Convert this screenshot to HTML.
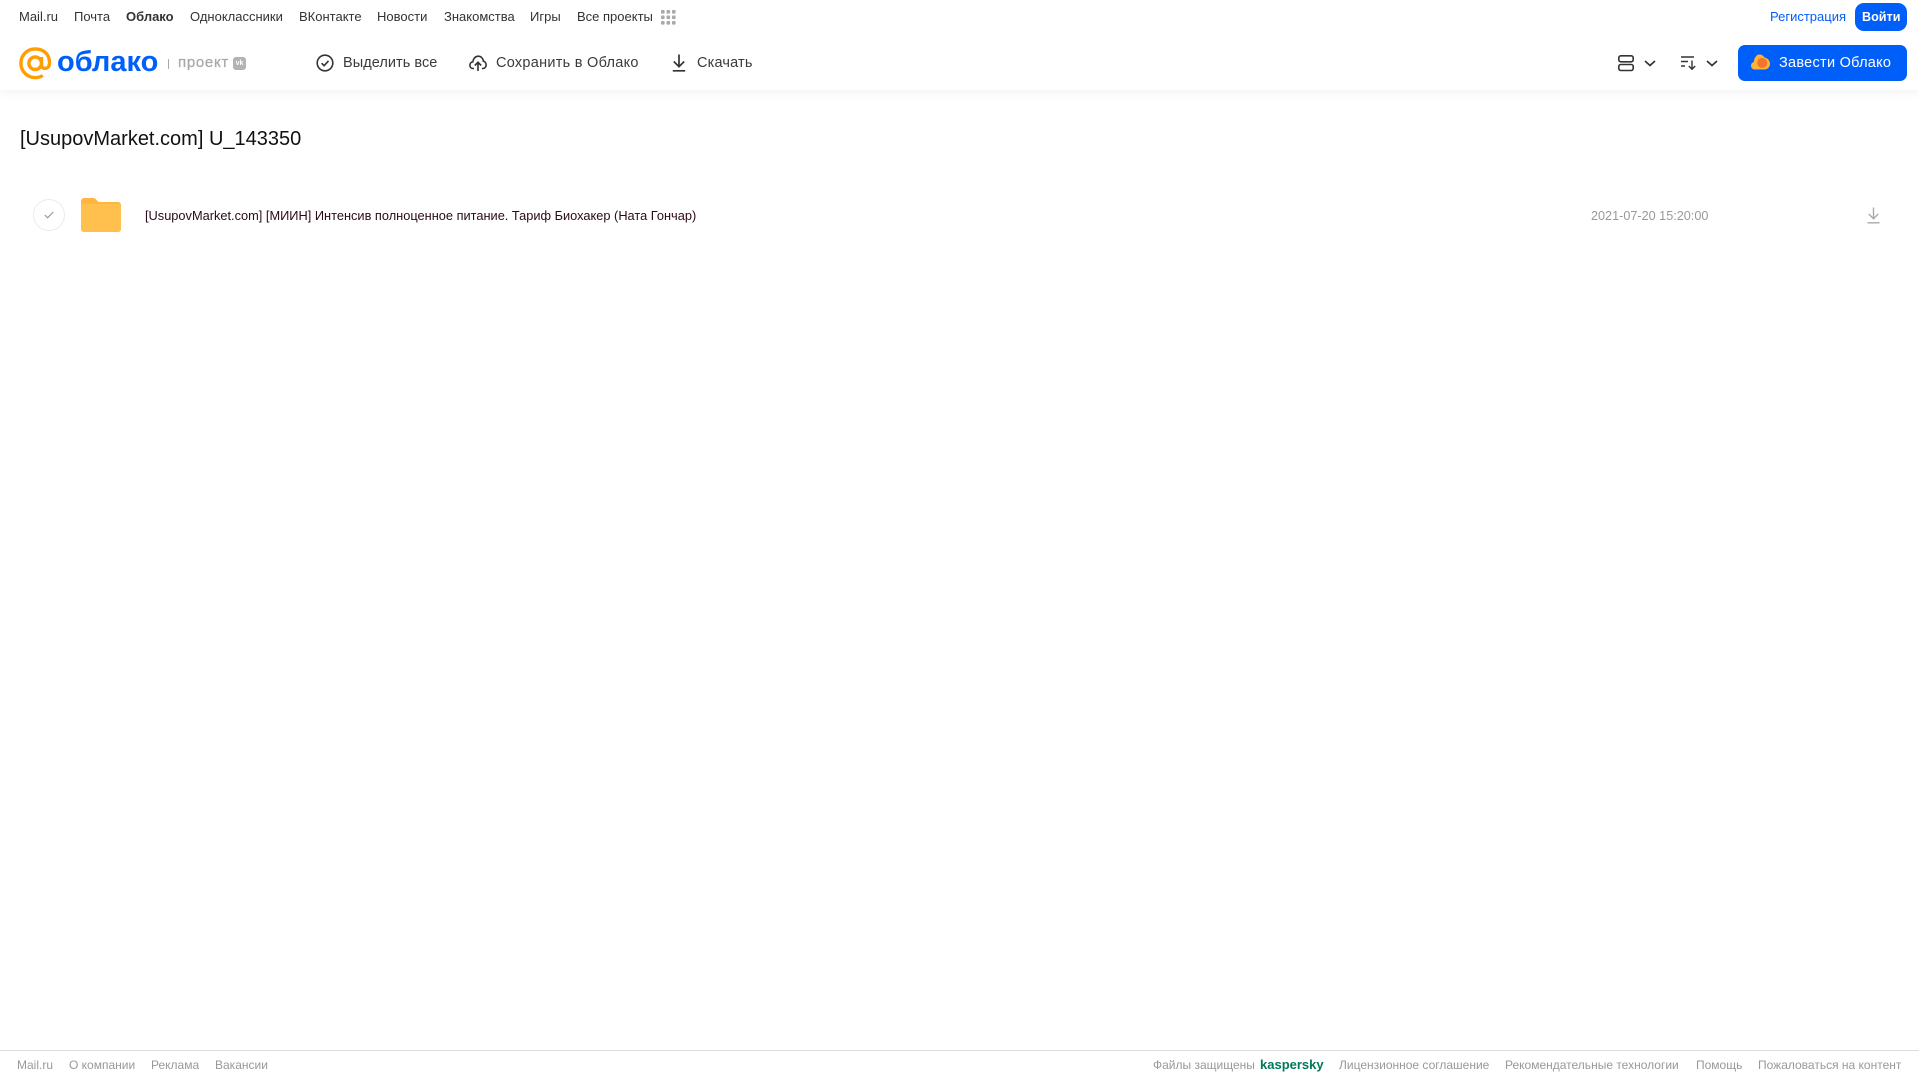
<!DOCTYPE html>
<html lang="ru"><head><meta charset="utf-8"><title>Облако</title>
<style>
html,body{margin:0;padding:0;background:#fff}
body{width:1919px;height:1079px;position:relative;overflow:hidden;font-family:"Liberation Sans",Arial,sans-serif}
.t{position:absolute;white-space:nowrap;line-height:20px;height:20px}
.n{top:7px;font-size:13px;color:#333}
.b{top:53px;font-size:14.5px;color:#3a3a3a}
.f{top:1055px;font-size:12px;color:#999}
svg{position:absolute;overflow:visible}
</style></head><body>
<div style="position:absolute;left:0;top:0;width:1919px;height:90px;background:#fff;box-shadow:0 2px 10px rgba(0,0,0,.06)"></div>

<span class="t n" style="left:19px">Mail.ru</span>
<span class="t n" style="left:74px">Почта</span>
<span class="t n" style="left:126px;font-weight:bold">Облако</span>
<span class="t n" style="left:190px">Одноклассники</span>
<span class="t n" style="left:299px">ВКонтакте</span>
<span class="t n" style="left:377px">Новости</span>
<span class="t n" style="left:444px">Знакомства</span>
<span class="t n" style="left:530px">Игры</span>
<span class="t n" style="left:577px">Все проекты</span>
<svg style="left:661px;top:10px" width="15" height="15" fill="#aaa"><rect x="0" y="0" width="3.6" height="3.6" rx=".8"/><rect x="5.5" y="0" width="3.6" height="3.6" rx=".8"/><rect x="11" y="0" width="3.6" height="3.6" rx=".8"/><rect x="0" y="5.5" width="3.6" height="3.6" rx=".8"/><rect x="5.5" y="5.5" width="3.6" height="3.6" rx=".8"/><rect x="11" y="5.5" width="3.6" height="3.6" rx=".8"/><rect x="0" y="11" width="3.6" height="3.6" rx=".8"/><rect x="5.5" y="11" width="3.6" height="3.6" rx=".8"/><rect x="11" y="11" width="3.6" height="3.6" rx=".8"/></svg>

<span class="t n" style="left:1770px;color:#005ff9">Регистрация</span>
<div style="position:absolute;left:1855px;top:3px;width:52px;height:28px;border-radius:9px;background:#005ff9"></div>
<span class="t n" style="left:1862px;color:#fff;font-weight:bold;font-size:12.6px">Войти</span>

<!-- logo -->
<svg style="left:19px;top:47px" width="33" height="33" viewBox="0 0 33 33" fill="none" stroke="#ff9e00" stroke-width="3.4"><circle cx="16.2" cy="16.2" r="6.3"/><path d="M22.5 10v8.2c0 4.6 7.6 4.6 8-1.600C31 7.800 25 1.900 16.200 1.900 8.200 1.900 1.900 8.200 1.900 16.200S8.200 30.600 16.200 30.600c3 0 5.400-.7 7.600-2.100"/></svg>
<span class="t" style="left:57px;top:45px;height:34px;line-height:34px;font-size:29px;font-weight:bold;color:#005ff9">облако</span>
<div style="position:absolute;left:168px;top:59px;width:1px;height:10px;background:#aaa"></div>
<span class="t" style="left:178px;top:53px;font-size:15px;color:#a8a8a8;letter-spacing:.7px;-webkit-text-stroke:.25px #a8a8a8">проект</span>
<div style="position:absolute;left:233px;top:57px;width:13px;height:13px;border-radius:3px;background:#b3b3b3;color:#fff;font-size:7px;font-weight:bold;line-height:13px;text-align:center">vk</div>

<!-- toolbar -->
<svg style="left:316px;top:54px" width="18" height="18" viewBox="0 0 18 18" fill="none" stroke="#333" stroke-width="1.6"><circle cx="9" cy="9" r="7.8"/><path d="M5.6 9.2l2.5 2.5 4.4-4.8"/></svg>
<span class="t b" style="left:343px;letter-spacing:.05px">Выделить все</span>
<svg style="left:469px;top:54px" width="18" height="18" viewBox="0 0 18 18" fill="none" stroke="#333" stroke-width="1.6"><path d="M5 14.500H4.200C2 14.500.9 12.800.9 11.200c0-1.800 1.300-3.200 2.900-3.400C4.200 4.600 6.400 2.200 9.200 2.200c2.700 0 4.800 2.100 5.200 5 1.600.3 2.700 1.900 2.700 3.800 0 1.900-1.200 3.500-3.300 3.500h-.9"/><path d="M9 17V8.500M5.800 11.500L9 8.300l3.200 3.200"/></svg>
<span class="t b" style="left:496px;letter-spacing:.27px">Сохранить в Облако</span>
<svg style="left:672px;top:54px" width="14" height="18" viewBox="0 0 14 18" fill="none" stroke="#333" stroke-width="1.7"><path d="M7 .5v12M1.800 7.500L7 12.700l5.200-5.200M.8 16.800h12.400"/></svg>
<span class="t b" style="left:697px;letter-spacing:.17px">Скачать</span>

<svg style="left:1618px;top:55px" width="17" height="17" viewBox="0 0 17 17" fill="none" stroke="#333" stroke-width="1.6"><rect x=".8" y=".8" width="14.400" height="6" rx="2"/><rect x=".8" y="9.500" width="14.400" height="6" rx="2"/></svg>
<svg style="left:1644px;top:60px" width="12" height="7" viewBox="0 0 12 7" fill="none" stroke="#333" stroke-width="1.700"><path d="M1 1l5 4.500L11 1"/></svg>
<svg style="left:1681px;top:56px" width="16" height="14" viewBox="0 0 16 14" fill="none" stroke="#333" stroke-width="1.400"><path d="M0 1h13M0 5.500h7M0 10h4M11 4.500v8.500M7.800 10l3.200 3.200 3.200-3.200"/></svg>
<svg style="left:1706px;top:60px" width="12" height="7" viewBox="0 0 12 7" fill="none" stroke="#333" stroke-width="1.700"><path d="M1 1l5 4.500L11 1"/></svg>

<div style="position:absolute;left:1738px;top:45px;width:169px;height:36px;border-radius:7px;background:#005ff9"></div>
<svg style="left:1751px;top:54px" width="19" height="16" viewBox="0 0 19 16"><path d="M4 15.500C1.800 15.500 0 13.900 0 11.700c0-1.900 1.200-3.300 2.800-3.700C3.200 3.500 5.600.5 8.500.5c2.200 0 3.900 1.200 4.900 3 3.200.4 5.600 3.200 5.600 6.200 0 3.300-2.600 5.800-5.800 5.800z" fill="#ffb238"/><circle cx="11.200" cy="9" r="5" fill="#f5742a"/></svg>
<span class="t" style="left:1779px;top:53px;font-size:14.500px;color:#fff;letter-spacing:.27px">Завести Облако</span>

<!-- title -->
<span class="t" style="left:20px;top:127px;height:24px;line-height:24px;font-size:20px;color:#111">[UsupovMarket.com] U_143350</span>

<!-- row -->
<div style="position:absolute;left:33px;top:199px;width:30px;height:30px;border:1px solid #ececec;border-radius:50%"></div>
<svg style="left:44px;top:211px" width="10" height="8" viewBox="0 0 10 8" fill="none" stroke="#999" stroke-width="1.200"><path d="M.8 4l2.800 2.800L9.200 1"/></svg>
<svg style="left:81px;top:198px" width="40" height="34" viewBox="0 0 40 34"><path d="M0 3a3 3 0 0 1 3-3h9c2 0 3 1 4 2.500.7 1 1.500 1.500 3 1.500h18a3 3 0 0 1 3 3v24a3 3 0 0 1-3 3H3a3 3 0 0 1-3-3z" fill="#ffb640"/><path d="M0 8a2 2 0 0 1 2-2h36a2 2 0 0 1 2 2v23a3 3 0 0 1-3 3H3a3 3 0 0 1-3-3z" fill="#ffc04d"/></svg>
<span class="t" style="left:145px;top:206px;font-size:12.8px;color:#2a0a1a">[UsupovMarket.com] [МИИН] Интенсив полноценное питание. Тариф Биохакер (Ната Гончар)</span>
<span class="t" style="left:1591px;top:206px;font-size:12.65px;color:#999">2021-07-20 15:20:00</span>
<svg style="left:1867px;top:207px" width="13" height="17" viewBox="0 0 13 17" fill="none" stroke="#aaa" stroke-width="1.400"><path d="M6.500 .5v11M1.800 7l4.700 4.800L11.200 7M.5 15.800h12"/></svg>

<!-- footer -->
<div style="position:absolute;left:0;top:1050px;width:1919px;height:1px;background:#ddd"></div>
<span class="t f" style="left:17px">Mail.ru</span>
<span class="t f" style="left:69px">О компании</span>
<span class="t f" style="left:151px">Реклама</span>
<span class="t f" style="left:215px">Вакансии</span>
<span class="t f" style="left:1153px">Файлы защищены</span>
<span class="t f" style="left:1260px;color:#00785a;font-weight:bold;font-size:13px">kaspersky</span>
<span class="t f" style="left:1339px">Лицензионное соглашение</span>
<span class="t f" style="left:1505px">Рекомендательные технологии</span>
<span class="t f" style="left:1696px">Помощь</span>
<span class="t f" style="left:1758px">Пожаловаться на контент</span>
</body></html>
